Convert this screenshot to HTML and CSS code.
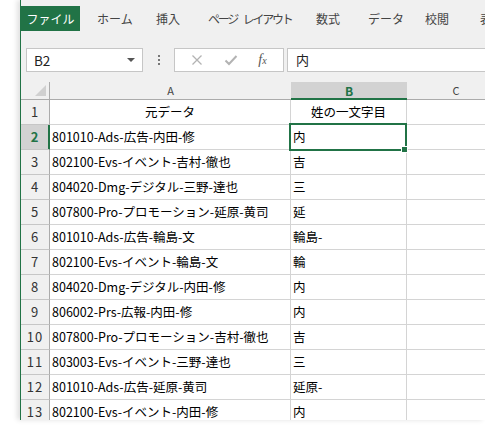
FILE: index.html
```html
<!DOCTYPE html>
<html lang="ja">
<head>
<meta charset="utf-8">
<link rel="stylesheet" href="styles.css">
</head>
<body>
<div class="window">
  <div class="tabs">
    <div class="tab file">ファイル</div>
    <div class="tab t-home">ホーム</div>
    <div class="tab t-ins">挿入</div>
    <div class="tab t-page">ページ レイアウト</div>
    <div class="tab t-form">数式</div>
    <div class="tab t-data">データ</div>
    <div class="tab t-rev">校閲</div>
    <div class="tab t-view">表示</div>
  </div>
  <div class="fbar">
    <div class="namebox"><span>B2</span><span class="caret"></span></div>
    <div class="dots"><i></i><i></i><i></i></div>
    <div class="fbtns">
      <svg class="ico" width="12" height="12" viewBox="0 0 12 12"><path d="M1.5 1.5 L10.5 10.5 M10.5 1.5 L1.5 10.5" stroke="#b3b3b3" stroke-width="1.3" fill="none"/></svg>
      <svg class="ico" width="14" height="12" viewBox="0 0 14 12"><path d="M1.5 6.5 L5 10 L12.5 2" stroke="#b3b3b3" stroke-width="2" fill="none"/></svg>
      <span class="fx">f<sub>x</sub></span>
    </div>
    <div class="finput">内</div>
  </div>
  <table class="grid">
    <colgroup><col class="c0"><col class="ca"><col class="cb"><col class="cc"></colgroup>
    <thead>
      <tr><th class="corner"><span class="tri"></span></th><th>A</th><th class="act">B</th><th>C</th></tr>
    </thead>
    <tbody>
      <tr><td class="rh">1</td><td class="ctr">元データ</td><td class="ctr">姓の一文字目</td><td></td></tr>
      <tr><td class="rh act">2</td><td>801010-Ads-広告-内田-修</td><td class="sel">内<span class="selbox"><span class="handle"></span></span></td><td></td></tr>
      <tr><td class="rh">3</td><td>802100-Evs-イベント-吉村-徹也</td><td>吉</td><td></td></tr>
      <tr><td class="rh">4</td><td>804020-Dmg-デジタル-三野-達也</td><td>三</td><td></td></tr>
      <tr><td class="rh">5</td><td>807800-Pro-プロモーション-延原-黄司</td><td>延</td><td></td></tr>
      <tr><td class="rh">6</td><td>801010-Ads-広告-輪島-文</td><td>輪島-</td><td></td></tr>
      <tr><td class="rh">7</td><td>802100-Evs-イベント-輪島-文</td><td>輪</td><td></td></tr>
      <tr><td class="rh">8</td><td>804020-Dmg-デジタル-内田-修</td><td>内</td><td></td></tr>
      <tr><td class="rh">9</td><td>806002-Prs-広報-内田-修</td><td>内</td><td></td></tr>
      <tr><td class="rh">10</td><td>807800-Pro-プロモーション-吉村-徹也</td><td>吉</td><td></td></tr>
      <tr><td class="rh">11</td><td>803003-Evs-イベント-三野-達也</td><td>三</td><td></td></tr>
      <tr><td class="rh">12</td><td>801010-Ads-広告-延原-黄司</td><td>延原-</td><td></td></tr>
      <tr><td class="rh">13</td><td>802100-Evs-イベント-内田-修</td><td>内</td><td></td></tr>
    </tbody>
  </table>
</div>
</body>
</html>
```
FILE: styles.css
```css
* { box-sizing: border-box; }
html, body { margin: 0; padding: 0; background: #fff; }
body {
  width: 485px; height: 430px; overflow: hidden;
  font-family: "Noto Sans CJK JP", "Noto Sans", sans-serif;
}
.window {
  margin-left: 20px;
  width: 465px;
  height: 420px;
  overflow: hidden;
  background: #f0f0f0;
  border-left: 1px solid #217346;
  box-shadow: -3px 0 5px rgba(0,0,0,0.12);
}
.tabs {
  display: flex;
  padding-top: 6px;
  height: 48px;
  white-space: nowrap;
}
.tab {
  height: 25px;
  line-height: 25px;
  font-size: 12px;
  color: #444;
  flex: none;
  overflow: visible;
}
.tab.file {
  background: #217346;
  color: #fff;
  width: 59px;
  text-align: center;
}
.t-home { margin-left: 17px; width: 59px; }
.t-ins { width: 52px; }
.t-page { width: 108px; letter-spacing: -2.2px; word-spacing: 5px; }
.t-form { width: 52px; }
.t-data { width: 57px; }
.t-rev { width: 55px; }
.t-view { width: 40px; }
.fbar {
  display: flex;
  align-items: center;
  height: 24px;
  padding-left: 5px;
}
.namebox {
  width: 117px; height: 24px;
  background: #fff;
  border: 1px solid #c6c6c6;
  display: flex; align-items: center; justify-content: space-between;
  padding: 0 7px 0 7px;
  font-size: 13.5px; color: #222;
}
.caret {
  width: 0; height: 0;
  border-left: 4px solid transparent;
  border-right: 4px solid transparent;
  border-top: 4px solid #555;
}
.dots {
  width: 31px; display: flex; flex-direction: column; align-items: center; gap: 2px;
}
.dots i { display: block; width: 2px; height: 2px; background: #777; }
.fbtns {
  width: 110px; height: 24px;
  background: #fff; border: 1px solid #c6c6c6;
  display: flex; align-items: center; justify-content: space-around;
  padding: 0 6px;
}
.fx {
  font-family: "Liberation Serif", serif; font-style: italic; font-size: 14px; color: #555;
}
.fx sub { font-size: 10px; vertical-align: 0; }
.finput {
  margin-left: 3px;
  flex: 1; height: 24px;
  background: #fff; border: 1px solid #c6c6c6; border-right: none;
  font-size: 13px; line-height: 22px; padding-left: 8px; color: #222;
}
.grid {
  margin-top: 10px;
  table-layout: fixed;
  border-collapse: separate;
  border-spacing: 0;
  width: 484px;
}
.c0 { width: 29px; }
.ca { width: 241px; }
.cb { width: 116px; }
.cc { width: 98px; }
.grid th {
  height: 18px; padding: 0;
  font-weight: normal; font-size: 11px; color: #444;
  background: #f0f0f0;
  border-bottom: 1px solid #ababab;
  line-height: 17px;
  text-align: center;
}
.grid th.corner { border-right: 1px solid #ababab; position: relative; }
.tri {
  position: absolute; right: 3px; bottom: 3px;
  width: 0; height: 0;
  border-left: 11px solid transparent;
  border-bottom: 11px solid #d0d0d0;
}
.grid th.act {
  background: #d2d2d2; color: #217346; font-weight: bold; font-size: 12px;
  border-bottom: 1px solid #217346;
  box-shadow: inset 0 -1px 0 #217346;
}
.grid td {
  height: 25px; padding: 0 0 0 2px;
  background: #fff;
  border-right: 1px solid #d4d4d4;
  border-bottom: 1px solid #d4d4d4;
  font-size: 12.5px; color: #000;
  white-space: nowrap; overflow: visible;
  line-height: 24px;
}
.grid td.ctr { text-align: center; padding: 0; }
.grid td.rh {
  background: #f0f0f0;
  border-right: 1px solid #ababab;
  border-bottom: 1px solid #c6c6c6;
  text-align: center; padding: 0;
  font-size: 13px; color: #333; letter-spacing: 1px;
}
.grid td.rh.act {
  background: #d2d2d2; color: #217346; font-weight: bold;
  border-right: 1px solid #217346;
  box-shadow: inset -1px 0 0 #217346;
}
.grid td.sel { position: relative; }
.selbox {
  position: absolute; left: -2px; top: -2px;
  width: 118px; height: 28px;
  border: 2px solid #217346;
}
.handle {
  position: absolute; right: -3px; bottom: -4px;
  width: 7px; height: 7px;
  background: #217346;
  border: 1px solid #fff;
}
```
